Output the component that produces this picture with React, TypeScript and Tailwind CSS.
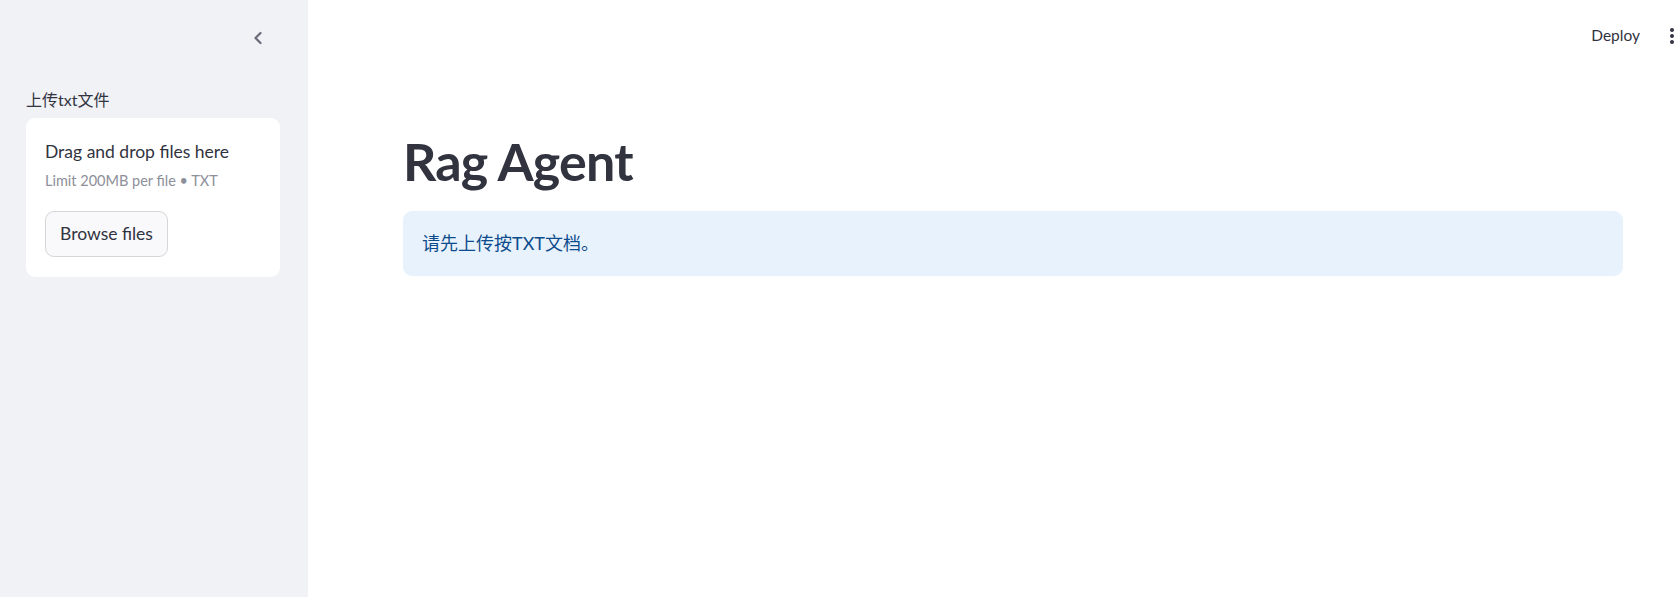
import { ChevronLeft } from 'lucide-react'

const SANS = 'font-["Lato","Noto_Sans_CJK_SC",sans-serif]'

function Sidebar() {
  return (
    <aside className="flex h-full w-[308px] shrink-0 flex-col bg-[#f0f2f6] px-[26px]">
      <div className="flex h-[76px] items-center justify-end pr-[14px]">
        <ChevronLeft className="h-5 w-5 text-[#6b6e7a]" strokeWidth={2.75} />
      </div>
      <label className="mt-[12px] mb-[6px] text-[16px] leading-[24px] text-[#31333f]">上传txt文件</label>
      <div className="flex w-[254px] flex-col rounded-[9px] bg-white px-[19px] pt-[21px] pb-[20px]">
        <p className="text-[17.5px] leading-[26px] text-[#31333f]">Drag and drop files here</p>
        <p className="mt-[6px] text-[14.5px] leading-[20px] text-[#8d8f99]">Limit 200MB per file • TXT</p>
        <button
          type="button"
          className="mt-[20px] h-[46px] w-[123px] rounded-[9px] border border-[#d6d6d9] bg-[#f9f9fb] text-[17.5px] text-[#31333f]"
        >
          Browse files
        </button>
      </div>
    </aside>
  )
}

export default function App() {
  return (
    <div className={`flex h-[597px] w-full overflow-hidden bg-white ${SANS}`}>
      <Sidebar />
      <main className="flex min-w-0 flex-1 flex-col">
        <header className="flex h-[72px] items-center justify-end gap-[29px] pr-[5px]">
          <span className="text-[15.5px] text-[#31333f]">Deploy</span>
          <svg width="6" height="18" viewBox="0 0 6 18" className="text-[#31333f]">
            <circle cx="3" cy="3" r="2" fill="currentColor" />
            <circle cx="3" cy="9" r="2" fill="currentColor" />
            <circle cx="3" cy="15" r="2" fill="currentColor" />
          </svg>
        </header>
        <div className="ml-[95px] w-[1220px] pt-[54px]">
          <h1 className="text-[52px] leading-[70px] font-bold tracking-[-0.8px] text-[#31333f]">Rag Agent</h1>
          <div className="mt-[15px] flex h-[65px] items-center rounded-[9px] bg-[#e8f2fc] px-[19px]">
            <p className="text-[18px] text-[#0d4c8c]">请先上传按TXT文档。</p>
          </div>
        </div>
      </main>
    </div>
  )
}
